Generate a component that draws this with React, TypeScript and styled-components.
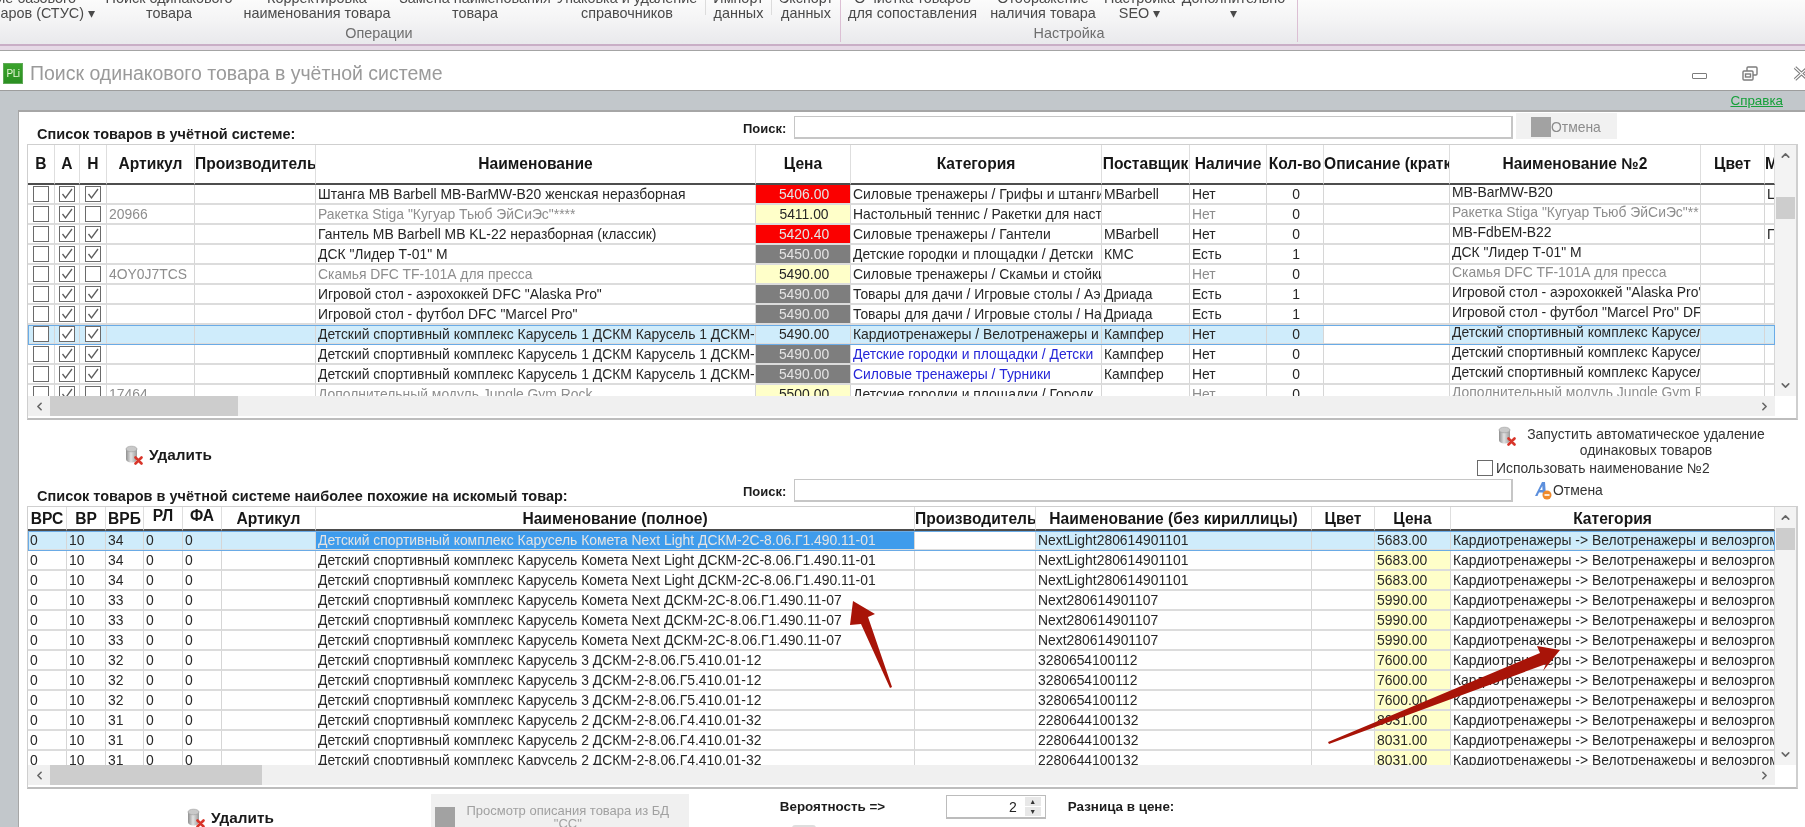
import { ChevronDown, ChevronLeft, ChevronRight, ChevronUp } from "lucide-react";
import styled, { createGlobalStyle } from "styled-components";

const GlobalStyle = createGlobalStyle`
  html, body {
    margin: 0;
    padding: 0;
    background: #fff;
  }
  * {
    box-sizing: border-box;
  }
`;

const Page = styled.div`
  width: 1805px;
  height: 827px;
  overflow: hidden;
  display: flex;
  flex-direction: column;
  font-family: "Liberation Sans", Arial, sans-serif;
  font-size: 13.9px;
  color: #222;
  filter: blur(0.4px);
`;

/* ribbon */
const Ribbon = styled.div`
  height: 44px;
  flex: none;
  display: flex;
  overflow: hidden;
  background: linear-gradient(#fbfbfb, #f4f4f5 45%, #e9e9ec);
`;

const RibbonGroup = styled.div<{ $width: number }>`
  width: ${p => p.$width}px;
  flex: none;
  height: 42px;
  display: flex;
  flex-direction: column;
  justify-content: flex-end;
  border-right: 1px solid #dcbfd4;
`;

const RibbonRow = styled.div`
  display: flex;
  align-items: flex-end;
`;

const RibbonButton = styled.div<{ $width: number }>`
  width: ${p => p.$width}px;
  flex: none;
  text-align: center;
  white-space: nowrap;
  line-height: 15px;
  font-size: 14.4px;
  color: #4a4a4a;
  display: flex;
  flex-direction: column;
  align-items: center;
`;

const CutButton = styled(RibbonButton)`
  align-items: flex-end;
`;

const CutLine = styled.span<{ $shift?: number }>`
  display: block;
  margin-right: ${p => p.$shift ?? 0}px;
`;

const RibbonDivider = styled.div<{ $gap?: number }>`
  width: 1px;
  height: 15px;
  flex: none;
  margin-left: ${p => p.$gap ?? 0}px;
  margin-bottom: 6px;
  background: #dcdcdc;
`;

const GroupLabel = styled.div<{ $shift?: number }>`
  height: 21px;
  line-height: 24px;
  text-align: center;
  font-size: 14.4px;
  color: #6e6e6e;
  padding-right: ${p => p.$shift ?? 0}px;
`;

const RibbonEdge = styled.div`
  height: 7px;
  flex: none;
  border-top: 2px solid #c9aec6;
  border-bottom: 1px solid #a4a4a4;
  background: #e6d9e6;
`;

/* window title */
const TitleBar = styled.div`
  height: 40px;
  flex: none;
  display: flex;
  align-items: center;
  padding: 6px 0 0 3px;
  background: #fff;
  border-bottom: 1px solid #9d9d9d;
`;

const AppLogo = styled.div`
  width: 20px;
  height: 21px;
  flex: none;
  display: flex;
  align-items: center;
  justify-content: center;
  background: linear-gradient(#3aa32c, #2b8f22);
  border: 1px solid #5fa957;
  color: #e9f7d8;
  font-size: 10px;
  letter-spacing: -0.5px;
`;

const WindowTitle = styled.div`
  margin-left: 7px;
  font-size: 19.5px;
  color: #9a9a9a;
  white-space: nowrap;
`;

const WindowControls = styled.div`
  margin-left: auto;
  margin-right: -5px;
  display: flex;
  align-items: center;
  color: #777;
`;

const MinimizeGlyph = styled.div`
  width: 15px;
  height: 6px;
  margin-top: 4px;
  border: 1.5px solid #7c7c7c;
  border-radius: 1px;
`;

const RestoreSlot = styled.div`
  margin-left: 35px;
  margin-right: 35px;
  display: flex;
`;

/* body */
const Body = styled.div`
  flex: 1;
  min-height: 0;
  display: flex;
  flex-direction: column;
  padding-left: 18px;
  background: #c2c7cb;
`;

const HelpRow = styled.div`
  height: 19px;
  flex: none;
  padding-right: 22px;
  text-align: right;
  line-height: 18px;
`;

const HelpLink = styled.a`
  color: #16a03a;
  text-decoration: underline;
  font-size: 13.4px;
`;

const Panel = styled.div`
  flex: 1;
  min-height: 0;
  background: #fff;
  border-top: 2px solid #a6a6a6;
  border-left: 1px solid #a6a6a6;
  padding-left: 8px;
`;

const SearchBar = styled.div<{ $height: number; $top: number }>`
  height: ${p => p.$height}px;
  padding-top: ${p => p.$top}px;
  display: flex;
  align-items: flex-start;
`;

const ListTitle = styled.div`
  width: 716px;
  flex: none;
  align-self: flex-end;
  padding-left: 10px;
  padding-bottom: 2px;
  line-height: 16px;
  font-weight: bold;
  font-size: 14.5px;
  white-space: nowrap;
  color: #1c1c1c;
`;

const SearchLabel = styled.div`
  width: 51px;
  flex: none;
  line-height: 26px;
  font-weight: bold;
  font-size: 13px;
  color: #1c1c1c;
`;

const SearchField = styled.div`
  width: 719px;
  height: 23px;
  flex: none;
  background: #fff;
  border: 1px solid #c6c6c6;
  border-bottom-width: 2px;
  border-right-width: 2px;
`;

const DisabledCancel = styled.div`
  width: 101px;
  height: 26px;
  flex: none;
  margin-left: 3px;
  margin-top: -3px;
  padding: 4px 0 0 15px;
  display: flex;
  background: #f1f1f1;
  color: #8c8c8c;
  line-height: 20px;
`;

const GreySquare = styled.div`
  width: 20px;
  height: 20px;
  flex: none;
  background: #a2a2a2;
`;

const ActiveCancel = styled.div`
  margin-left: 21px;
  display: flex;
  align-items: center;
  height: 22px;
  color: #333;
  gap: 1px;
`;

/* grid */
const Frame = styled.div<{ $height: number }>`
  width: 1771px;
  height: ${p => p.$height}px;
  border: 1px solid #cfcfcf;
  border-bottom: 2px solid #bdbdbd;
  border-right-width: 2px;
  display: grid;
  grid-template-columns: 1747px 21px;
  grid-template-rows: 1fr 22px;
  background: #fff;
`;

const Viewport = styled.div`
  overflow: hidden;
  min-height: 0;
`;

const Table = styled.table`
  width: 1747px;
  table-layout: fixed;
  border-collapse: separate;
  border-spacing: 0;
`;

const Th = styled.th<{ $height: number; $raised?: number }>`
  height: ${p => p.$height}px;
  padding: 0 0 ${p => p.$raised ?? 0}px 0;
  overflow: hidden;
  white-space: nowrap;
  text-align: center;
  font-weight: bold;
  font-size: 15.6px;
  line-height: 17px;
  color: #161616;
  border-right: 1px solid #dedede;
  border-bottom: 2px solid #4d4d4d;
`;

const Tr = styled.tr<{ $selected?: boolean }>`
  background: ${p => (p.$selected ? "#cfecfb" : "#fff")};
  outline: ${p => (p.$selected ? "1px solid #6aabe6" : "none")};
  outline-offset: -1px;
`;

type Tone = "plain" | "muted" | "link" | "light";

const toneColors: Record<Tone, string> = {
  plain: "#262626",
  muted: "#8d8d8d",
  link: "#2626d8",
  light: "#e4e4e4",
};

const Td = styled.td<{ $tone?: Tone; $center?: boolean; $fill?: string; $raised?: boolean }>`
  height: 20px;
  padding: 0 0 ${p => (p.$raised ? 4 : 0)}px 2px;
  overflow: hidden;
  white-space: nowrap;
  line-height: ${p => (p.$raised ? 13 : 17)}px;
  text-align: ${p => (p.$center ? "center" : "left")};
  color: ${p => toneColors[p.$tone ?? "plain"]};
  background: ${p => p.$fill ?? "transparent"};
  border-right: 1px solid #d6d6d6;
  border-bottom: 2px solid #dcdcdc;
`;

const BoxCell = styled.td`
  height: 20px;
  padding: 0;
  line-height: 0;
  text-align: center;
  border-right: 1px solid #d6d6d6;
  border-bottom: 2px solid #dcdcdc;
`;

const TickBox = styled.span`
  display: inline-flex;
  align-items: center;
  justify-content: center;
  width: 16px;
  height: 16px;
  flex: none;
  vertical-align: top;
  background: #fff;
  border: 1.5px solid #6a6a6a;
`;

const VScroll = styled.div`
  display: flex;
  flex-direction: column;
  align-items: center;
  background: #f3f3f3;
  color: #666;
  min-height: 0;
`;

const ArrowSlot = styled.div`
  height: 21px;
  flex: none;
  display: flex;
  align-items: center;
  justify-content: center;
`;

const VThumb = styled.div<{ $top: number }>`
  width: 19px;
  height: 22px;
  margin-top: ${p => p.$top}px;
  background: #cdcdcd;
`;

const Spacer = styled.div`
  flex: 1;
`;

const HScroll = styled.div`
  height: 20px;
  display: flex;
  align-items: center;
  background: #f0f0f0;
  color: #666;
`;

const HArrow = styled.div`
  width: 22px;
  flex: none;
  display: flex;
  justify-content: center;
`;

const HThumb = styled.div<{ $width: number }>`
  width: ${p => p.$width}px;
  height: 20px;
  background: #cdcdcd;
`;

/* actions */
const ActionRow = styled.div`
  height: 59px;
  display: flex;
  justify-content: space-between;
`;

const DeleteButton = styled.div<{ $left: number; $top: number }>`
  margin-left: ${p => p.$left}px;
  margin-top: ${p => p.$top}px;
  height: 20px;
  flex: none;
  display: flex;
  align-items: center;
  gap: 5px;
  font-weight: bold;
  font-size: 15.3px;
  color: #1a1a1a;
`;

const AutoColumn = styled.div`
  width: 328px;
  flex: none;
  padding-top: 6px;
`;

const AutoButton = styled.div`
  display: flex;
  padding-left: 20px;
`;

const AutoCaption = styled.div`
  width: 258px;
  text-align: center;
  line-height: 16px;
  white-space: nowrap;
  color: #333;
`;

const UseNameRow = styled.div`
  margin-top: 2px;
  display: flex;
  align-items: center;
  gap: 3px;
  color: #333;
  white-space: nowrap;
`;

/* bottom */
const BottomRow = styled.div`
  display: flex;
  align-items: flex-start;
`;

const PreviewButton = styled.div`
  width: 258px;
  height: 40px;
  flex: none;
  margin-left: 157px;
  margin-top: 5px;
  padding: 13px 0 0 4px;
  display: flex;
  background: #f0f0f0;
  color: #a0a0a0;
`;

const PreviewCaption = styled.div`
  flex: 1;
  margin-top: -3px;
  text-align: center;
  line-height: 13px;
  font-size: 13px;
  padding-right: 8px;
`;

const ChanceColumn = styled.div`
  width: 166px;
  flex: none;
  margin-left: 91px;
  padding-top: 10px;
`;

const BoldLabel = styled.div`
  font-weight: bold;
  font-size: 13.4px;
  line-height: 16px;
  color: #1c1c1c;
  white-space: nowrap;
`;

const StubBox = styled.div`
  width: 24px;
  height: 10px;
  margin: 10px 0 0 12px;
  background: #dedede;
  border-radius: 3px;
`;

const Spinner = styled.div`
  width: 100px;
  height: 24px;
  flex: none;
  margin-top: 6px;
  display: flex;
  justify-content: flex-end;
  align-items: center;
  border: 1px solid #bcbcbc;
  border-bottom-width: 2px;
  padding-right: 4px;
`;

const SpinnerValue = styled.span`
  margin-right: 8px;
  font-size: 14px;
`;

const StepperStack = styled.div`
  width: 16px;
  display: flex;
  flex-direction: column;
  gap: 1px;
`;

const Stepper = styled.div`
  height: 9px;
  display: flex;
  align-items: center;
  justify-content: center;
  background: #e8e8e8;
  font-size: 7px;
  line-height: 9px;
  color: #333;
`;

const PriceDiffLabel = styled(BoldLabel)`
  margin-left: 22px;
  margin-top: 10px;
`;

/* annotations drawn over the screenshot */
const Annotations = styled.svg`
  position: absolute;
  left: 0;
  top: 0;
  pointer-events: none;
`;

const DeleteIcon = () => (
  <svg width="20" height="20" viewBox="0 0 20 20" style={{ flex: "none" }}>
    <defs>
      <linearGradient id="can" x1="0" x2="1">
        <stop offset="0" stopColor="#8f8f8f" />
        <stop offset="0.45" stopColor="#e2e2e2" />
        <stop offset="1" stopColor="#9a9a9a" />
      </linearGradient>
    </defs>
    <path d="M2 4v10c0 2 2.5 3.5 5.5 3.5S13 16 13 14V4z" fill="url(#can)" />
    <ellipse cx="7.5" cy="4" rx="5.5" ry="2.8" fill="#c9c9c9" stroke="#9a9a9a" strokeWidth="0.6" />
    <path d="M11.5 12.5l6 6M17.5 12.5l-6 6" stroke="#d8352a" strokeWidth="2.6" strokeLinecap="round" />
  </svg>
);

const CancelIcon = () => (
  <svg width="18" height="20" viewBox="0 0 18 20" style={{ flex: "none" }}>
    <path d="M1 16L8 2h3l1 14h-3l-.3-3.5H5L3.5 16zM6 10h2.5L8.3 6z" fill="#5c8fdc" fillRule="evenodd" />
    <circle cx="13" cy="15" r="4.5" fill="#ef8a2c" />
    <rect x="10.5" y="14.2" width="5" height="1.6" fill="#fff" />
  </svg>
);

const RestoreIcon = () => (
  <svg width="16" height="15" viewBox="0 0 16 15" fill="none" stroke="#7c7c7c" strokeWidth="1.4">
    <rect x="5" y="1" width="10" height="8" rx="1" />
    <rect x="1" y="5" width="10" height="9" rx="1" fill="#fff" />
    <rect x="3.5" y="8" width="5" height="3" />
  </svg>
);

const CloseIcon = () => (
  <svg width="17" height="15" viewBox="0 0 17 15" fill="none" style={{ flex: "none" }}>
    <path d="M2 1.5l13 12M15 1.5l-13 12" stroke="#7c7c7c" strokeWidth="3.4" />
    <path d="M2 1.5l13 12M15 1.5l-13 12" stroke="#fff" strokeWidth="1.2" />
  </svg>
);

const Tick = ({ on }: { on?: boolean }) => (
  <TickBox>
    {on && (
      <svg width="12" height="12" viewBox="0 0 12 12" fill="none" stroke="#5c5c5c" strokeWidth="1.3">
        <path d="M1.5 6l3 4L11 1" />
      </svg>
    )}
  </TickBox>
);

const stockCols = [27, 25, 27, 88, 121, 440, 95, 251, 88, 77, 57, 126, 251, 64, 10];
const stockHead = ["В", "А", "Н", "Артикул", "Производитель", "Наименование", "Цена", "Категория", "Поставщик", "Наличие", "Кол-во", "Описание (кратк", "Наименование №2", "Цвет", "М"];

interface StockRow {
  tick: boolean;
  code: string;
  name: string;
  price: string;
  priceKind: "red" | "grey" | "yellow" | "none";
  cat: string;
  catLink?: boolean;
  vendor: string;
  stock: string;
  qty: string;
  name2: string;
  tail?: string;
  muted?: boolean;
  selected?: boolean;
}

const carousel = "Детский спортивный комплекс Карусель 1 ДСКМ Карусель 1 ДСКМ-2";
const carousel2 = "Детский спортивный комплекс Карусель";

const stockRows: StockRow[] = [
  { tick: true, code: "", name: "Штанга MB Barbell MB-BarMW-B20 женская неразборная", price: "5406.00", priceKind: "red", cat: "Силовые тренажеры / Грифы и штанги", vendor: "MBarbell", stock: "Нет", qty: "0", name2: "MB-BarMW-B20", tail: "Ц" },
  { tick: false, code: "20966", name: 'Ракетка Stiga "Кугуар Тьюб ЭйСиЭс"****', price: "5411.00", priceKind: "yellow", cat: "Настольный теннис / Ракетки для наст", vendor: "", stock: "Нет", qty: "0", name2: 'Ракетка Stiga "Кугуар Тьюб ЭйСиЭс"**', muted: true },
  { tick: true, code: "", name: "Гантель MB Barbell MB KL-22 неразборная (классик)", price: "5420.40", priceKind: "red", cat: "Силовые тренажеры / Гантели", vendor: "MBarbell", stock: "Нет", qty: "0", name2: "MB-FdbEM-B22", tail: "Г" },
  { tick: true, code: "", name: 'ДСК "Лидер Т-01" М', price: "5450.00", priceKind: "grey", cat: "Детские городки и площадки / Детски", vendor: "КМС", stock: "Есть", qty: "1", name2: 'ДСК "Лидер Т-01" М' },
  { tick: false, code: "4OY0J7TCS", name: "Скамья DFC TF-101А для пресса", price: "5490.00", priceKind: "yellow", cat: "Силовые тренажеры / Скамьи и стойки", vendor: "", stock: "Нет", qty: "0", name2: "Скамья DFC TF-101А для пресса", muted: true },
  { tick: true, code: "", name: 'Игровой стол - аэрохоккей DFC "Alaska Pro"', price: "5490.00", priceKind: "grey", cat: "Товары для дачи / Игровые столы / Аэ", vendor: "Дриада", stock: "Есть", qty: "1", name2: 'Игровой стол - аэрохоккей "Alaska Pro"' },
  { tick: true, code: "", name: 'Игровой стол - футбол DFC "Marcel Pro"', price: "5490.00", priceKind: "grey", cat: "Товары для дачи / Игровые столы / На", vendor: "Дриада", stock: "Есть", qty: "1", name2: 'Игровой стол - футбол  "Marcel Pro" DFC' },
  { tick: true, code: "", name: carousel, price: "5490.00", priceKind: "none", cat: "Кардиотренажеры / Велотренажеры и", vendor: "Кампфер", stock: "Нет", qty: "0", name2: carousel2, selected: true },
  { tick: true, code: "", name: carousel, price: "5490.00", priceKind: "grey", cat: "Детские городки и площадки / Детски", catLink: true, vendor: "Кампфер", stock: "Нет", qty: "0", name2: carousel2 },
  { tick: true, code: "", name: carousel, price: "5490.00", priceKind: "grey", cat: "Силовые тренажеры / Турники", catLink: true, vendor: "Кампфер", stock: "Нет", qty: "0", name2: carousel2 },
  { tick: false, code: "17464", name: "Дополнительный модуль Jungle Gym Rock", price: "5500.00", priceKind: "yellow", cat: "Детские городки и площадки / Городк", vendor: "", stock: "Нет", qty: "0", name2: "Дополнительный модуль Jungle Gym Ro", muted: true },
];

const priceFills = { red: "#fb0000", grey: "#7e7e7e", yellow: "#ffffc9", none: "transparent" };

const similarCols = [39, 39, 38, 39, 39, 94, 599, 121, 276, 63, 76, 324];
const similarHead = ["ВРС", "ВР", "ВРБ", "РЛ", "ФА", "Артикул", "Наименование (полное)", "Производитель", "Наименование (без кириллицы)", "Цвет", "Цена", "Категория"];

const similarGroups = [
  { score: "34", name: "Детский спортивный комплекс Карусель Комета Next Light ДСКМ-2С-8.06.Г1.490.11-01", latin: "NextLight280614901101", price: "5683.00" },
  { score: "33", name: "Детский спортивный комплекс Карусель Комета Next ДСКМ-2С-8.06.Г1.490.11-07", latin: "Next280614901107", price: "5990.00" },
  { score: "32", name: "Детский спортивный комплекс Карусель 3 ДСКМ-2-8.06.Г5.410.01-12", latin: "3280654100112", price: "7600.00" },
  { score: "31", name: "Детский спортивный комплекс Карусель 2 ДСКМ-2-8.06.Г4.410.01-32", latin: "2280644100132", price: "8031.00" },
];

const similarRows = similarGroups.flatMap(group => [group, group, group]);

const Scrollbars = ({ vTop, hWidth }: { vTop: number; hWidth: number }) => (
  <>
    <VScroll>
      <ArrowSlot>
        <ChevronUp size={13} strokeWidth={3} />
      </ArrowSlot>
      <VThumb $top={vTop} />
      <Spacer />
      <ArrowSlot>
        <ChevronDown size={13} strokeWidth={3} />
      </ArrowSlot>
    </VScroll>
    <HScroll>
      <HArrow>
        <ChevronLeft size={13} strokeWidth={3} />
      </HArrow>
      <HThumb $width={hWidth} />
      <Spacer />
      <HArrow>
        <ChevronRight size={13} strokeWidth={3} />
      </HArrow>
    </HScroll>
  </>
);

function App() {
  return (
    <Page>
      <GlobalStyle />
      <Ribbon>
        <RibbonGroup $width={841}>
          <RibbonRow>
            <CutButton $width={95}>
              <CutLine $shift={19}>Создание базового</CutLine>
              <CutLine>товаров (СТУС) ▾</CutLine>
            </CutButton>
            <RibbonButton $width={148}>Поиск одинакового<br />товара</RibbonButton>
            <RibbonButton $width={148}>Корректировка<br />наименования товара</RibbonButton>
            <RibbonButton $width={168}>Замена наименования<br />товара</RibbonButton>
            <RibbonButton $width={136}>Упаковка и удаление<br />справочников</RibbonButton>
            <RibbonDivider $gap={10} />
            <RibbonButton $width={65}>Импорт<br />данных</RibbonButton>
            <RibbonDivider />
            <RibbonButton $width={68}>Экспорт<br />данных</RibbonButton>
          </RibbonRow>
          <GroupLabel $shift={82}>Операции</GroupLabel>
        </RibbonGroup>
        <RibbonGroup $width={457}>
          <RibbonRow>
            <RibbonButton $width={143}>О чистка товаров<br />для сопоставления</RibbonButton>
            <RibbonButton $width={118}>Отображение<br />наличия товара</RibbonButton>
            <RibbonButton $width={75}>Настройка<br />SEO ▾</RibbonButton>
            <RibbonButton $width={113}>Дополнительно<br />▾</RibbonButton>
          </RibbonRow>
          <GroupLabel>Настройка</GroupLabel>
        </RibbonGroup>
      </Ribbon>
      <RibbonEdge />
      <TitleBar>
        <AppLogo>PLi</AppLogo>
        <WindowTitle>Поиск одинакового товара в учётной системе</WindowTitle>
        <WindowControls>
          <MinimizeGlyph />
          <RestoreSlot>
            <RestoreIcon />
          </RestoreSlot>
          <CloseIcon />
        </WindowControls>
      </TitleBar>
      <Body>
        <HelpRow>
          <HelpLink>Справка</HelpLink>
        </HelpRow>
        <Panel>
          <SearchBar $height={32} $top={4}>
            <ListTitle>Список товаров в учётной системе:</ListTitle>
            <SearchLabel>Поиск:</SearchLabel>
            <SearchField />
            <DisabledCancel>
              <GreySquare />
              Отмена
            </DisabledCancel>
          </SearchBar>
          <Frame $height={276}>
            <Viewport>
              <Table>
                <colgroup>
                  {stockCols.map((width, i) => (
                    <col key={i} style={{ width }} />
                  ))}
                </colgroup>
                <thead>
                  <tr>
                    {stockHead.map(title => (
                      <Th key={title} $height={40} $raised={2}>{title}</Th>
                    ))}
                  </tr>
                </thead>
                <tbody>
                  {stockRows.map((row, i) => {
                    const soft = row.muted ? "muted" : "plain";
                    return (
                      <Tr key={i} $selected={row.selected}>
                        <BoxCell><Tick /></BoxCell>
                        <BoxCell><Tick on /></BoxCell>
                        <BoxCell><Tick on={row.tick} /></BoxCell>
                        <Td $tone="muted">{row.code}</Td>
                        <Td />
                        <Td $tone={soft}>{row.name}</Td>
                        <Td $center $fill={priceFills[row.priceKind]} $tone={row.priceKind === "red" || row.priceKind === "grey" ? "light" : "plain"}>{row.price}</Td>
                        <Td $tone={row.catLink ? "link" : "plain"}>{row.cat}</Td>
                        <Td>{row.vendor}</Td>
                        <Td $tone={soft}>{row.stock}</Td>
                        <Td $center>{row.qty}</Td>
                        <Td $fill={row.selected ? "#fff" : undefined} />
                        <Td $tone={soft} $raised>{row.name2}</Td>
                        <Td />
                        <Td>{row.tail}</Td>
                      </Tr>
                    );
                  })}
                </tbody>
              </Table>
            </Viewport>
            <Scrollbars vTop={31} hWidth={188} />
          </Frame>
          <ActionRow>
            <DeleteButton $left={97} $top={25}>
              <DeleteIcon />
              Удалить
            </DeleteButton>
            <AutoColumn>
              <AutoButton>
                <DeleteIcon />
                <AutoCaption>Запустить автоматическое удаление<br />одинаковых товаров</AutoCaption>
              </AutoButton>
              <UseNameRow>
                <TickBox />
                Использовать наименование №2
              </UseNameRow>
            </AutoColumn>
          </ActionRow>
          <SearchBar $height={27} $top={0}>
            <ListTitle>Список товаров в учётной системе наиболее похожие на искомый товар:</ListTitle>
            <SearchLabel>Поиск:</SearchLabel>
            <SearchField />
            <ActiveCancel>
              <CancelIcon />
              Отмена
            </ActiveCancel>
          </SearchBar>
          <Frame $height={283}>
            <Viewport>
              <Table>
                <colgroup>
                  {similarCols.map((width, i) => (
                    <col key={i} style={{ width }} />
                  ))}
                </colgroup>
                <thead>
                  <tr>
                    {similarHead.map(title => (
                      <Th key={title} $height={24} $raised={title === "РЛ" || title === "ФА" ? 5 : 0}>{title}</Th>
                    ))}
                  </tr>
                </thead>
                <tbody>
                  {similarRows.map((row, i) => {
                    const first = i === 0;
                    return (
                      <Tr key={i} $selected={first}>
                        <Td>0</Td>
                        <Td>10</Td>
                        <Td>{row.score}</Td>
                        <Td>0</Td>
                        <Td>0</Td>
                        <Td />
                        <Td $fill={first ? "#3f9cec" : undefined} $tone={first ? "light" : "plain"}>{row.name}</Td>
                        <Td $fill={first ? "#fff" : undefined} />
                        <Td>{row.latin}</Td>
                        <Td />
                        <Td $fill={first ? undefined : "#ffffc9"}>{row.price}</Td>
                        <Td>Кардиотренажеры -&gt; Велотренажеры и велоэргом</Td>
                      </Tr>
                    );
                  })}
                </tbody>
              </Table>
            </Viewport>
            <Scrollbars vTop={0} hWidth={212} />
          </Frame>
          <BottomRow>
            <DeleteButton $left={159} $top={19}>
              <DeleteIcon />
              Удалить
            </DeleteButton>
            <PreviewButton>
              <GreySquare />
              <PreviewCaption>Просмотр описания товара из БД<br />"СС"</PreviewCaption>
            </PreviewButton>
            <ChanceColumn>
              <BoldLabel>Вероятность =&gt;</BoldLabel>
              <StubBox />
            </ChanceColumn>
            <Spinner>
              <SpinnerValue>2</SpinnerValue>
              <StepperStack>
                <Stepper>▲</Stepper>
                <Stepper>▼</Stepper>
              </StepperStack>
            </Spinner>
            <PriceDiffLabel>Разница в цене:</PriceDiffLabel>
          </BottomRow>
        </Panel>
      </Body>
      <Annotations width="1805" height="827" viewBox="0 0 1805 827">
        <polygon points="853,601 875,614 868,617 892,687 890,688 861,624 850,625" fill="#a81408" />
        <polygon points="1560,650 1537,646 1540,653 1328,742 1329,744 1546,664 1543,671" fill="#a81408" />
      </Annotations>
    </Page>
  );
}

export default App;
